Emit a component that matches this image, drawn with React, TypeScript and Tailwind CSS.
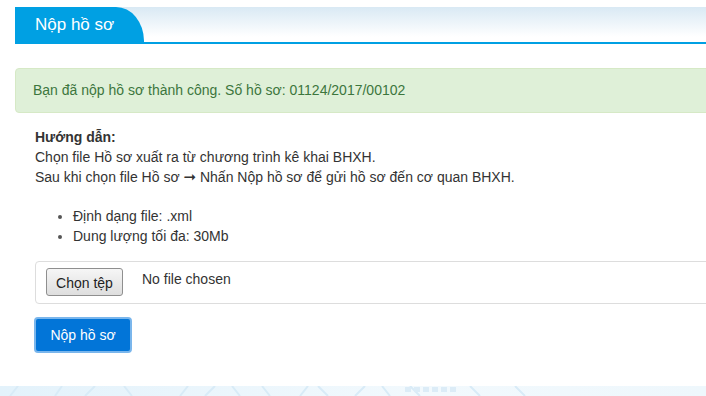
import React from "react";

export default function App() {
  return (
    <div className="w-[706px] h-[396px] overflow-hidden bg-white relative" style={{ fontFamily: '"Liberation Sans", Arial, sans-serif' }}>
      <div className="w-[760px] pl-[15px]">
        {/* Header */}
        <div className="mt-[7px] flex border-b-2 border-[#00a0e3] bg-[linear-gradient(to_bottom,#d9e9f4,#ffffff_85%)]">
          <div className="w-[129px] h-[35px] bg-[#00a0e3] rounded-tr-[28px_34px] text-white text-[17px] flex items-center pl-[20px] pt-[1px]">
            Nộp hồ sơ
          </div>
        </div>

        {/* Alert */}
        <div className="mt-[24px] h-[45px] bg-[#dff0d8] border border-[#d6e9c6] rounded-l-[4px] text-[#3c763d] text-[14px] flex items-center pl-[17px]">
          Bạn đã nộp hồ sơ thành công. Số hồ sơ: 01124/2017/00102
        </div>

        {/* Content */}
        <div className="pl-[20px] text-[14px] leading-[20px] text-[#333333]">
          <div className="mt-[14px]">
            <div className="font-bold h-[20px]">Hướng dẫn:</div>
            <div className="h-[20px]">Chọn file Hồ sơ xuất ra từ chương trình kê khai BHXH.</div>
            <div className="h-[20px]">
              Sau khi chọn file Hồ sơ{" "}
              <span style={{ fontFamily: '"DejaVu Sans", sans-serif' }} className="inline-block h-[20px] align-top text-[15px] leading-[20px]">➞</span>{" "}
              Nhấn Nộp hồ sơ để gửi hồ sơ đến cơ quan BHXH.
            </div>
          </div>
          <ul className="mt-[19px] pl-[38px] list-disc marker:text-[#555]">
            <li className="h-[20px]">Định dạng file: .xml</li>
            <li className="h-[20px]">Dung lượng tối đa: 30Mb</li>
          </ul>

          {/* File box */}
          <div className="mt-[15px] h-[43px] border border-[#dddddd] rounded-l-[4px] flex items-center pl-[10px]">
            <div className="flex items-center -mt-[2px]">
              <button className="h-[28px] w-[77px] border border-[#8f8f8f] rounded-[3px] bg-[linear-gradient(to_bottom,#f6f6f6,#dedede)] text-[14px] text-[#222] flex items-center justify-center pt-[2px]">
                Chọn tệp
              </button>
              <span className="ml-[19px] text-[14px] text-[#333] -mt-[6px]">No file chosen</span>
            </div>
          </div>

          {/* Submit */}
          <button className="mt-[13px] -ml-[1px] h-[36px] w-[98px] rounded-[4px] bg-[#0275d8] border-2 border-[#7ab6ec] text-white text-[14px] flex items-center justify-center">
            Nộp hồ sơ
          </button>
        </div>
      </div>

      {/* Footer pattern */}
      <div className="absolute left-0 right-0 top-[386px] h-[10px] bg-[linear-gradient(to_right,#e3f2fb,#f2f9fd_60%,#eef7fc)] overflow-hidden">
        <svg width="706" height="10" className="block">
          <g stroke="#d8ebf7" strokeWidth="2" fill="none">
            <path d="M10 10 L18 0 M55 10 L62 0 M85 10 L95 0 M132 10 L124 0 M180 10 L188 0 M205 10 L215 0 M240 10 L232 0 M270 10 L262 0 M300 10 L308 0 M328 10 L318 0 M355 10 L365 0 M390 10 L382 0 M420 10 L410 0 M480 10 L470 0 M525 10 L515 0" />
          </g>
          <g fill="#dcecf7">
            <rect x="405" y="1" width="6" height="5" />
            <rect x="414" y="1" width="6" height="5" />
            <rect x="423" y="1" width="6" height="5" />
            <rect x="432" y="1" width="6" height="5" />
            <rect x="441" y="1" width="6" height="5" />
            <rect x="450" y="1" width="6" height="5" />
          </g>
        </svg>
      </div>
    </div>
  );
}
